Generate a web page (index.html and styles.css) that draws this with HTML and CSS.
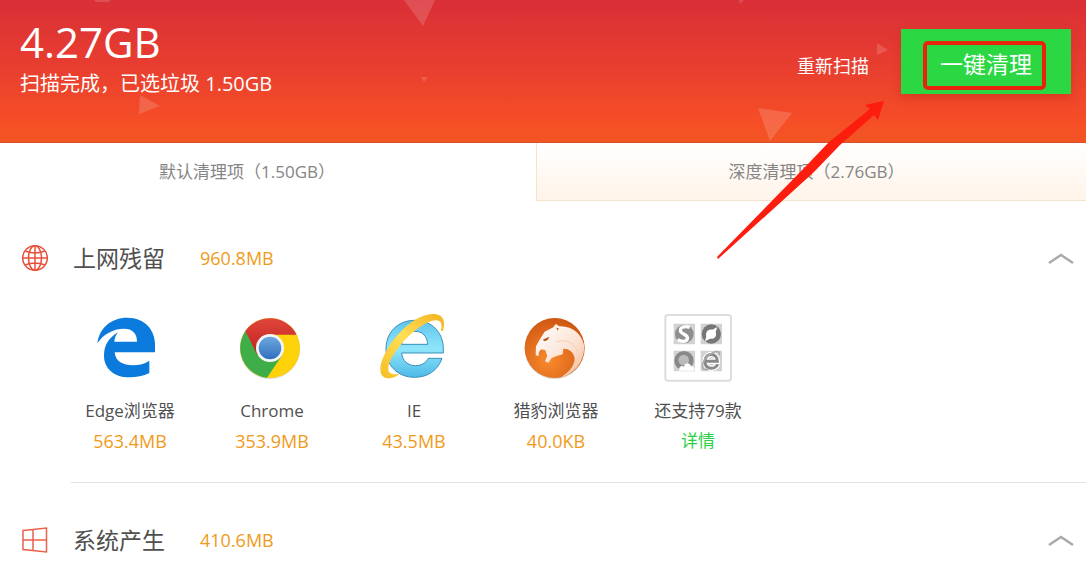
FILE: index.html
```html
<!DOCTYPE html>
<html lang="zh-CN">
<head>
    <meta charset="UTF-8">
    <meta name="viewport" content="width=device-width, initial-scale=1.0">
    <title>垃圾清理</title>
    <link rel="stylesheet" href="styles.css">
</head>
<body>
    <header class="topo">
        <svg class="triangles" width="1086" height="142" viewBox="0 0 1086 142" aria-hidden="true">
            <path d="M94 0h17l-2 2H96zM140 95l20 11-21 8zM404 0h31l-12 26zM421 77h7l-4 5zM739 0h5l-4 4zM877 43l11 7-11 5zM758 108l34 5-22 28z"/>
        </svg>
        <div class="summary">
            <h1>4.27GB</h1>
            <p>扫描完成，已选垃圾 1.50GB</p>
        </div>
        <div class="actions">
            <button class="rescan" type="button">重新扫描</button>
            <button class="clean" type="button">一键清理</button>
        </div>
        <span class="mark"></span>
        <svg class="arrow" width="168" height="158" viewBox="0 0 168 158" aria-hidden="true">
            <path d="M167 0L148 4l5 4L112 41 91 63 0 156l1 2 96-87 26-27 34-30 4 5z"/>
        </svg>
    </header>
    <nav class="tabs">
        <button class="tab active" type="button">默认清理项（1.50GB）</button>
        <button class="tab deep" type="button">深度清理项（2.76GB）</button>
    </nav>
    <main>
        <section class="group">
            <div class="group-head">
                <svg class="group-icon" width="28" height="28" viewBox="0 0 28 28" aria-hidden="true">
                    <g fill="none" stroke="#e9503c" stroke-width="1.5">
                        <circle cx="14" cy="14" r="12.3"/>
                        <ellipse cx="14" cy="14" rx="6.5" ry="12.3"/>
                        <path d="M14 1.500v25M1.500 14h25M4 7c6 2.500 14 2.500 20 0M4 21c6-2.500 14-2.500 20 0"/>
                    </g>
                </svg>
                <h2>上网残留</h2>
                <span class="size">960.8MB</span>
                <button class="toggle" type="button" aria-label="收起">
                    <svg width="28" height="14" viewBox="0 0 28 14"><path d="M2 12L14 4l12 8" fill="none" stroke="#aaa" stroke-width="2.500"/></svg>
                </button>
            </div>
            <ul class="items">
                <li class="item">
                    <svg class="logo" viewBox="48 27 204 204" aria-hidden="true">
                        <path fill="#0a7bdc" d="M52 115C58 70 92 38 142 38C195 38 225 75 225 118V142H104C106 170 130 181 158 181C178 181 195 176 208 167V204C190 213 170 217 148 217C100 217 72 188 72 152C72 122 85 99 114 82C106 92 104 100 103 110H171C171 85 158 71 132 71C98 71 68 90 52 115Z"/>
                    </svg>
                    <span class="name">Edge浏览器</span>
                    <span class="size">563.4MB</span>
                </li>
                <li class="item">
                    <svg class="logo" viewBox="54 27 204 204" aria-hidden="true">
                        <defs>
                            <linearGradient id="chromeRed" x1="0" y1="0" x2="0" y2="1"><stop offset="0" stop-color="#e0463c"/><stop offset="1" stop-color="#c0201c"/></linearGradient>
                            <linearGradient id="chromeBlue" x1="0" y1="0" x2="0" y2="1"><stop offset="0" stop-color="#6fa8e0"/><stop offset="1" stop-color="#2f6fbd"/></linearGradient>
                        </defs>
                        <circle cx="150" cy="132" r="90" fill="#ddd"/>
                        <circle cx="150" cy="129" r="90" fill="#fdd20a"/>
                        <path fill="#3fae49" d="M76 78A90 90 0 0 0 141 218L187 150L150 129Z"/>
                        <path fill="url(#chromeRed)" d="M76 78A90 90 0 0 1 230 89H150L112 150Z"/>
                        <circle cx="150" cy="129" r="42" fill="#f4f6f8"/>
                        <circle cx="150" cy="129" r="34" fill="url(#chromeBlue)"/>
                    </svg>
                    <span class="name">Chrome</span>
                    <span class="size">353.9MB</span>
                </li>
                <li class="item">
                    <svg class="logo" viewBox="45 27 204 204" aria-hidden="true">
                        <defs>
                            <linearGradient id="ieBlue" x1="0" y1="0" x2="0" y2="1"><stop offset="0" stop-color="#5fc3ec"/><stop offset=".5" stop-color="#8fe6fb"/><stop offset="1" stop-color="#4db9e8"/></linearGradient>
                            <linearGradient id="ieGold" x1="1" y1="0" x2="0" y2="1"><stop offset="0" stop-color="#f2b31f"/><stop offset=".5" stop-color="#ffdf55"/><stop offset="1" stop-color="#f6bd25"/></linearGradient>
                        </defs>
                        <path fill="url(#ieBlue)" stroke="#3a8fb9" stroke-width="3" d="M149 46C200 46 235 82 235 132V144H110C112 168 130 182 151 182C169 182 183 174 190 160H231C219 196 188 217 149 217C98 217 63 181 63 132C63 82 99 46 149 46ZM110 118H188C186 92 172 79 149 79C127 79 113 94 110 118Z"/>
                        <path fill="url(#ieGold)" d="M233 79C243 53 236 28 207 27C163 26 111 67 76 118C45 164 34 211 63 219C77 222 91 217 104 207C90 209 77 208 72 200C64 187 78 155 105 122C139 80 188 44 215 46C228 47 233 58 227 77Z"/>
                    </svg>
                    <span class="name">IE</span>
                    <span class="size">43.5MB</span>
                </li>
                <li class="item">
                    <svg class="logo" viewBox="36 27 204 204" aria-hidden="true">
                        <defs>
                            <radialGradient id="cheetahOrange" cx=".4" cy=".7" r=".7"><stop offset="0" stop-color="#f98a2c"/><stop offset="1" stop-color="#cf5712"/></radialGradient>
                            <linearGradient id="cheetahFur" x1="0" y1="0" x2="1" y2="1"><stop offset="0" stop-color="#fff"/><stop offset=".6" stop-color="#fbe2d2"/><stop offset="1" stop-color="#f3b48a"/></linearGradient>
                        </defs>
                        <circle cx="134" cy="132" r="90" fill="#d9d9d9"/>
                        <circle cx="134" cy="129" r="90" fill="url(#cheetahOrange)"/>
                        <path fill="url(#cheetahFur)" d="M78 124L88 106L104 80L130 67L137 57L148 64C188 62 215 88 222 120C226 160 200 205 151 218C182 199 197 176 193 155C188 138 174 130 160 131L158 148L140 153L125 159L115 173L105 169L112 153L106 136L94 133L87 140L85 154L77 150Z"/>
                        <path fill="#b8561f" d="M98 104l20-9-4 9-10 5zM139 68l7 2-3 7z"/>
                        <path fill="none" stroke="#f6cdb2" stroke-width="3" d="M140 110c32-8 52 4 62 28"/>
                    </svg>
                    <span class="name">猎豹浏览器</span>
                    <span class="size">40.0KB</span>
                </li>
                <li class="item">
                    <svg class="logo" viewBox="45 27 204 204" aria-hidden="true">
                        <rect x="49" y="30" width="197" height="197" rx="8" fill="#fff" stroke="#ddd" stroke-width="6"/>
                        <path fill="#d2d2d2" d="M74 56h64v62H74zM155 56h64v62h-64zM74 137h64v62H74zM155 137h64v62h-64z"/>
                        <circle cx="106" cy="87" r="28" fill="#8e8e8e"/>
                        <path fill="none" stroke="#fff" stroke-width="10" d="M122 67C103 60 87 72 97 82C104 89 119 91 115 102C111 111 98 111 86 104"/>
                        <circle cx="187" cy="87" r="29" fill="#777"/>
                        <path fill="#fff" d="M205 66l-5 15c5 15-7 23-17 20l-15 8 4-15c-4-14 7-23 18-20z"/>
                        <circle cx="105" cy="167" r="29" fill="#888"/>
                        <circle cx="104" cy="165" r="16" fill="#bbb"/>
                        <path fill="#fff" d="M91 197c-3-12 8-17 14-12 3-13 18-13 21-1 8-2 12 6 10 13z"/>
                        <path fill="none" stroke="#fff" stroke-width="16" d="M169 169h36c0-27-35-27-37-2-2 26 29 30 38 11"/>
                        <path fill="none" stroke="#888" stroke-width="9" d="M169 169h36c0-27-35-27-37-2-2 26 29 30 38 11"/>
                        <path fill="none" stroke="#aaa" stroke-width="5" d="M211 150c4-23-37-5-48 22-8 19 3 25 15 19"/>
                    </svg>
                    <span class="name">还支持79款</span>
                    <a class="details" href="#">详情</a>
                </li>
            </ul>
        </section>
        <section class="group">
            <div class="group-head">
                <svg class="group-icon" width="28" height="28" viewBox="0 0 28 28" aria-hidden="true">
                    <path d="M2 4.500L25.500 2v24L2 23.500zM12 3.500v21M2 14h23.500" fill="none" stroke="#e9604c" stroke-width="1.500"/>
                </svg>
                <h2>系统产生</h2>
                <span class="size">410.6MB</span>
                <button class="toggle" type="button" aria-label="收起">
                    <svg width="28" height="14" viewBox="0 0 28 14"><path d="M2 12L14 4l12 8" fill="none" stroke="#aaa" stroke-width="2.500"/></svg>
                </button>
            </div>
        </section>
    </main>
</body>
</html>
```

FILE: styles.css
```css
* {
    box-sizing: border-box;
    margin: 0;
    padding: 0;
    font-family: "Open Sans", "Noto Sans CJK SC", sans-serif;
}
body {
    background-color: #fff;
    color: #505050;
    font-size: 17px;
}
button {
    border: none;
    background: none;
    cursor: pointer;
}
h1, h2 {
    font-weight: normal;
}
.topo {
    position: relative;
    display: flex;
    justify-content: space-between;
    align-items: flex-start;
    height: 143px;
    padding: 18px 15px 0 20px;
    color: #fff;
    background: linear-gradient(#d92f37, #e93f2f 50%, #f64f26 88%, #f15523);
    border-bottom: 1px solid #d9502c;
}
.triangles {
    position: absolute;
    top: 0;
    left: 0;
    fill: #fff;
    opacity: 0.15;
}
.summary {
    position: relative;
}
.summary h1 {
    font-size: 42px;
    line-height: 48px;
}
.summary p {
    font-size: 20px;
    line-height: 36px;
}
.actions {
    position: relative;
    display: flex;
    align-items: center;
    gap: 32px;
    padding-top: 11px;
}
.rescan {
    padding-top: 8px;
    color: #fff;
    font-size: 18px;
    line-height: 28px;
}
.clean {
    width: 170px;
    height: 65px;
    padding-top: 2px;
    color: #fff;
    font-size: 23px;
    background-color: #2bd843;
    box-shadow: 0 4px 8px rgba(190, 40, 20, 0.4);
}
/* destaque em volta do botao e seta */
.mark {
    position: absolute;
    top: 41px;
    right: 40px;
    width: 123px;
    height: 49px;
    border: 4px solid #e8230e;
    border-radius: 5px;
    pointer-events: none;
}
.arrow {
    position: absolute;
    top: 101px;
    right: 201px;
    fill: #fc1d0e;
    pointer-events: none;
    z-index: 1;
}
.tabs {
    display: flex;
    height: 58px;
}
.tab {
    color: #858585;
    font-size: 17px;
    line-height: 24px;
}
.tab.active {
    width: 536px;
    padding-right: 42px;
}
.tab.deep {
    flex: 1;
    padding-left: 10px;
    background: linear-gradient(#fff, #fff4e9);
    border-left: 1px solid #f8e2c8;
    border-bottom: 1px solid #f5e2cc;
}
.group {
    padding-top: 40px;
}
.group-head {
    display: flex;
    align-items: center;
    height: 34px;
    padding: 0 11px 0 21px;
}
.group-head h2 {
    margin: 0 35px 0 24px;
    font-size: 23px;
    line-height: 34px;
}
.size {
    color: #f09a1a;
    font-size: 18px;
    line-height: 30px;
}
.toggle {
    display: flex;
    margin-left: auto;
}
.items {
    display: flex;
    margin-left: 71px;
    padding: 39px 0 26px;
    border-bottom: 1px solid #e2e2e2;
    list-style: none;
}
.item {
    display: flex;
    flex-direction: column;
    align-items: center;
    width: 142px;
}
.item:first-child {
    margin-left: -12px;
}
.logo {
    width: 68px;
    height: 68px;
    margin-bottom: 14px;
}
.name {
    line-height: 30px;
}
.details {
    color: #2ccf45;
    line-height: 30px;
    text-decoration: none;
}
```
